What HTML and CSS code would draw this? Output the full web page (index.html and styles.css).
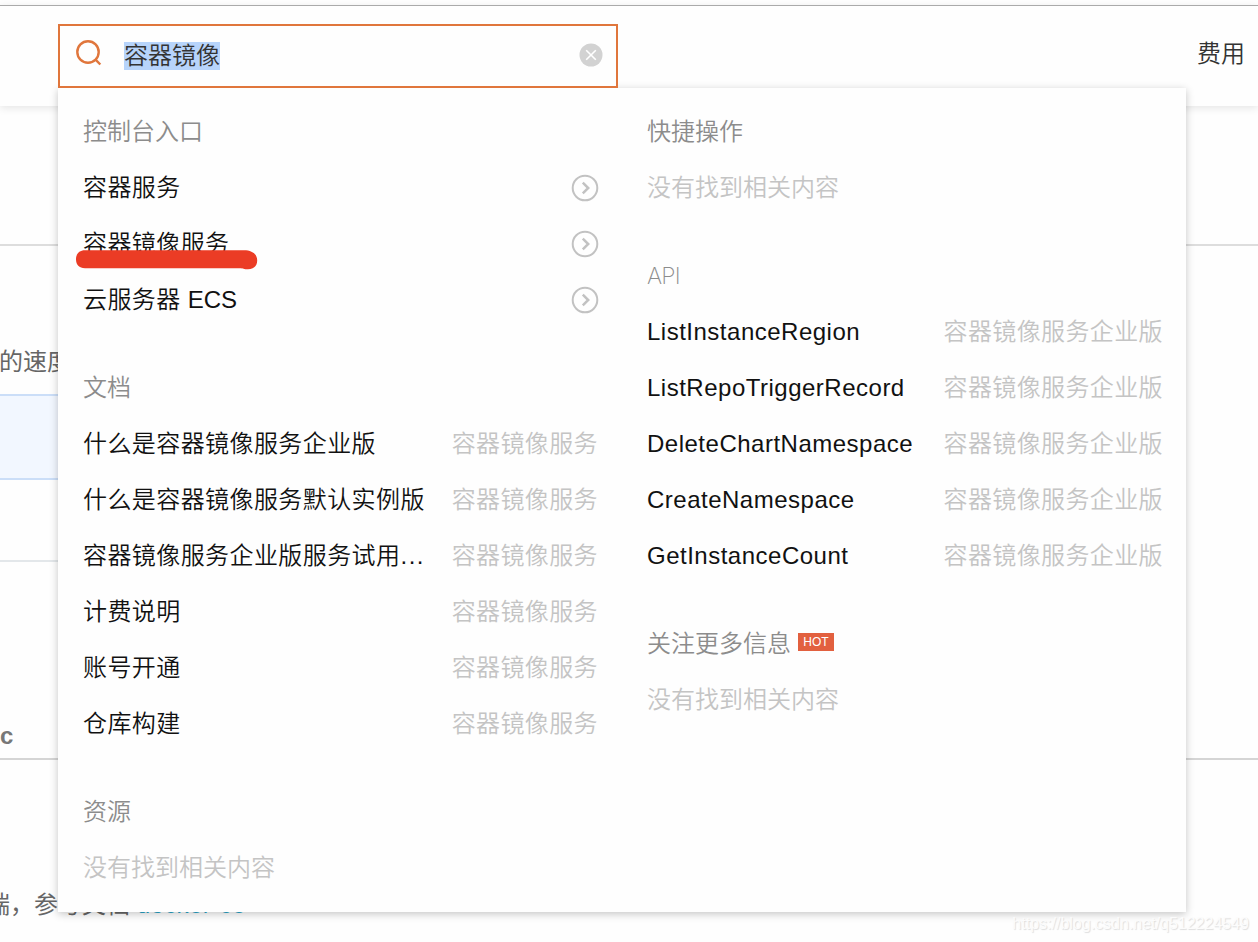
FILE: index.html
```html
<!DOCTYPE html>
<html lang="zh-CN">
<head>
<meta charset="utf-8">
<title>容器镜像</title>
<link rel="stylesheet" href="styles.css">
</head>
<body>
<div class="page">
  <header class="topbar"><span class="nav-item">费用</span></header>
  <main class="content">
    <div class="section section-intro"></div>
    <div class="section section-speed"><p class="copy">的速度</p></div>
    <div class="notice"></div>
    <div class="section section-blank"></div>
    <div class="section section-tab"><b class="tab-text">c</b></div>
    <p class="copy doc-line">端，参考文档 <a class="link">docker-ce</a></p>
  </main>

  <div class="search">
    <div class="search-box">
      <svg class="search-icon" width="28" height="28" viewBox="0 0 28 28"><circle cx="13" cy="13" r="10.7"/><path d="M20.3 20.3 25.3 25.5"/></svg>
      <span class="query"><mark class="selected">容器镜像</mark></span>
      <svg class="clear-icon" width="24" height="24" viewBox="0 0 24 24"><circle cx="12" cy="12" r="11.5"/><path d="M7.2 7.2 16.8 16.8M16.8 7.2 7.2 16.8"/></svg>
    </div>
    <div class="panel">
      <div class="column column-left">
        <section class="group">
          <h3 class="heading">控制台入口</h3>
          <div class="row"><span class="name">容器服务</span><svg class="go" viewBox="0 0 28 28"><circle cx="14" cy="14" r="12.3"/><path d="M11.8 8.7 17.2 14 11.8 19.3"/></svg></div>
          <div class="row"><span class="name struck">容器镜像服务<svg class="marker" width="182" height="20" viewBox="0 0 182 20"><path d="M9 .2H168C176 .2 181.2 4 181.2 10.5C181.2 16.5 177 19.3 172 19.3C168 19.3 167 18.2 164 18.2H9C3 18.2 0 14.5 0 9.2C0 4 3 .2 9 .2Z"/></svg></span><svg class="go" viewBox="0 0 28 28"><circle cx="14" cy="14" r="12.3"/><path d="M11.8 8.7 17.2 14 11.8 19.3"/></svg></div>
          <div class="row"><span class="name">云服务器 <span class="ecs">ECS</span></span><svg class="go" viewBox="0 0 28 28"><circle cx="14" cy="14" r="12.3"/><path d="M11.8 8.7 17.2 14 11.8 19.3"/></svg></div>
        </section>
        <section class="group">
          <h3 class="heading">文档</h3>
          <div class="row"><span class="name">什么是容器镜像服务企业版</span><span class="source">容器镜像服务</span></div>
          <div class="row"><span class="name">什么是容器镜像服务默认实例版</span><span class="source">容器镜像服务</span></div>
          <div class="row"><span class="name">容器镜像服务企业版服务试用<span class="ellipsis">...</span></span><span class="source">容器镜像服务</span></div>
          <div class="row"><span class="name">计费说明</span><span class="source">容器镜像服务</span></div>
          <div class="row"><span class="name">账号开通</span><span class="source">容器镜像服务</span></div>
          <div class="row"><span class="name">仓库构建</span><span class="source">容器镜像服务</span></div>
        </section>
        <section class="group">
          <h3 class="heading">资源</h3>
          <div class="row empty">没有找到相关内容</div>
        </section>
      </div>
      <div class="column column-right">
        <section class="group">
          <h3 class="heading">快捷操作</h3>
          <div class="row empty">没有找到相关内容</div>
        </section>
        <section class="group">
          <h3 class="heading heading-api">API</h3>
          <div class="row"><span class="name latin">ListInstanceRegion</span><span class="source">容器镜像服务企业版</span></div>
          <div class="row"><span class="name latin">ListRepoTriggerRecord</span><span class="source">容器镜像服务企业版</span></div>
          <div class="row"><span class="name latin">DeleteChartNamespace</span><span class="source">容器镜像服务企业版</span></div>
          <div class="row"><span class="name latin">CreateNamespace</span><span class="source">容器镜像服务企业版</span></div>
          <div class="row"><span class="name latin">GetInstanceCount</span><span class="source">容器镜像服务企业版</span></div>
        </section>
        <section class="group">
          <h3 class="heading">关注更多信息<span class="hot">HOT</span></h3>
          <div class="row empty">没有找到相关内容</div>
        </section>
      </div>
    </div>
  </div>
  <div class="watermark">https://blog.csdn.net/q512224549</div>
</div>
</body>
</html>
```
FILE: styles.css
```css
* { box-sizing: border-box; margin: 0; padding: 0; }
body {
  font-family: "Liberation Sans", "Noto Sans CJK SC", sans-serif;
  font-size: 24px;
  font-weight: 350;
  background: #fefefe;
  color: #111;
}
svg { fill: none; flex: none; }
.page { position: relative; width: 1258px; height: 942px; overflow: hidden; padding-top: 5px; }
.topbar {
  height: 101px;
  border-top: 1px solid #aaa;
  background: #fefefe;
  display: flex;
  justify-content: flex-end;
  padding: 30px 13px 0 0;
  box-shadow: 0 2px 8px rgba(0, 0, 0, .1);
  line-height: 36px;
  color: #333;
}
.content { color: #666; }
.section-intro { height: 140px; border-bottom: 2px solid #ddd; }
.section-speed { height: 148px; padding-top: 98px; }
.copy { line-height: 36px; white-space: nowrap; font-weight: 400; }
.section-speed .copy { margin-left: -1px; }
.notice {
  width: 1100px;
  height: 86px;
  background: #f2f7ff;
  border: solid #cbdef8;
  border-width: 2px 0;
}
.section-blank { width: 1100px; height: 82px; border-bottom: 2px solid #e3e7ea; }
.section-tab { height: 198px; padding-top: 156px; border-bottom: 2px solid #d5d5d5; }
.tab-text { display: block; line-height: 36px; color: #777; font-weight: 700; }
.doc-line { padding-top: 127px; margin-left: -14px; }
.link { color: #28a5c9; letter-spacing: .4px; }

.search { position: absolute; left: 58px; top: 24px; width: 1128px; }
.search-box {
  position: relative;
  z-index: 1;
  width: 560px;
  height: 64px;
  border: 2px solid #e0763c;
  background: #fefefe;
  display: flex;
  align-items: center;
  padding: 0 13px 0 15px;
}
.search-icon { margin-top: -7px; stroke: #e0763c; stroke-width: 2.4; }
.query { flex: 1; padding-left: 21px; color: #333; line-height: 28px; }
.selected { display: inline-block; height: 28px; line-height: 27px; background: #b7d4fb; color: inherit; }
.clear-icon { margin-top: -2px; }
.clear-icon circle { fill: #d2d2d2; }
.clear-icon path { stroke: #fff; stroke-width: 1.6; }

.panel {
  height: 824px;
  padding: 16px 0;
  display: flex;
  background: #fefefe;
  box-shadow: 0 2px 8px rgba(0, 0, 0, .23);
}
.column { display: flex; flex-direction: column; gap: 32px; }
.column-left { width: 564px; padding: 0 24px 0 25px; }
.column-right { width: 564px; padding: 0 23px 0 25px; }
.heading, .row { height: 56px; display: flex; align-items: center; line-height: 36px; }
.heading { color: #8c8c8c; font-size: 24px; font-weight: 350; }
.heading-api { font-family: Inter, Roboto, sans-serif; font-size: 23px; font-weight: 200; letter-spacing: -.8px; }
.row { justify-content: space-between; white-space: nowrap; letter-spacing: .42px; }
.source { color: #c4c4c4; letter-spacing: .38px; }
.row.empty { color: #c4c4c4; letter-spacing: 0; }
.latin { letter-spacing: .5px; }
.ecs { letter-spacing: 0; }
.ellipsis { letter-spacing: 1.5px; }
.go { width: 28px; height: 28px; margin: -1px -.5px 0 0; stroke: #c2c2c2; stroke-width: 2; }
.go path { stroke-width: 2.5; }
.struck { position: relative; }
.marker { position: absolute; left: -7px; top: 24px; }
.marker path { fill: #eb3c25; }
.hot {
  width: 36px;
  height: 18px;
  margin: -5px 0 0 7px;
  background: #e2603f;
  color: #fff;
  font-size: 12px;
  font-weight: 400;
  line-height: 19px;
  text-align: center;
}
.watermark {
  position: absolute;
  right: 9px;
  bottom: 8px;
  font-size: 16px;
  line-height: 20px;
  color: #fcfcfc;
  text-shadow: 1px 1px 1px #ddd;
}
```
